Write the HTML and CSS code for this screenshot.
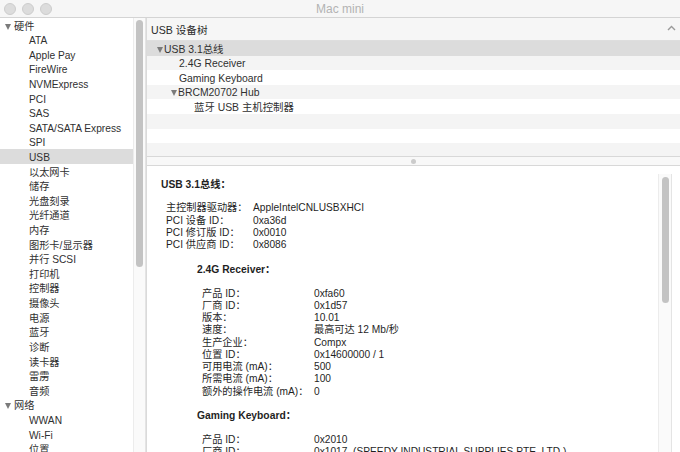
FILE: index.html
```html
<!DOCTYPE html>
<html lang="zh-CN">
<head>
<meta charset="utf-8">
<title>Mac mini</title>
<link rel="stylesheet" href="styles.css">
</head>
<body>
<div class="window">
  <div class="titlebar">
    <div class="lights"><span></span><span></span><span></span></div>
    <div class="title">Mac mini</div>
  </div>
  <div class="main">
    <div class="sidebar">
      <ul class="src">
        <li class="group"><span class="tri"></span>硬件</li>
        <li>ATA</li>
        <li>Apple Pay</li>
        <li>FireWire</li>
        <li>NVMExpress</li>
        <li>PCI</li>
        <li>SAS</li>
        <li>SATA/SATA Express</li>
        <li>SPI</li>
        <li class="sel">USB</li>
        <li>以太网卡</li>
        <li>储存</li>
        <li>光盘刻录</li>
        <li>光纤通道</li>
        <li>内存</li>
        <li>图形卡/显示器</li>
        <li>并行 SCSI</li>
        <li>打印机</li>
        <li>控制器</li>
        <li>摄像头</li>
        <li>电源</li>
        <li>蓝牙</li>
        <li>诊断</li>
        <li>读卡器</li>
        <li>雷雳</li>
        <li>音频</li>
        <li class="group"><span class="tri"></span>网络</li>
        <li>WWAN</li>
        <li>Wi-Fi</li>
        <li>位置</li>
      </ul>
    </div>
    <div class="vscroll side-scroll"><div class="thumb"></div></div>
    <div class="content">
      <div class="tree-pane">
        <div class="tree-head">
          <span>USB 设备树</span>
          <svg class="caret" width="9" height="6" viewBox="0 0 9 6"><polyline points="1,5 4.5,1.5 8,5" fill="none" stroke="#9a9a9a" stroke-width="1.4"/></svg>
        </div>
        <div class="tree-rows">
          <div class="row sel lv0"><span class="tri"></span>USB 3.1总线</div>
          <div class="row lv1">2.4G Receiver</div>
          <div class="row lv1">Gaming Keyboard</div>
          <div class="row lv1t"><span class="tri"></span>BRCM20702 Hub</div>
          <div class="row lv2">蓝牙 USB 主机控制器</div>
        </div>
      </div>
      <div class="splitter"><span class="dot"></span></div>
      <div class="detail">
        <div class="detail-body">
          <div class="sec">
            <h3>USB 3.1总线：</h3>
            <dl class="kv k87">
              <dt>主控制器驱动器：</dt><dd>AppleIntelCNLUSBXHCI</dd>
              <dt>PCI 设备 ID：</dt><dd>0xa36d</dd>
              <dt>PCI 修订版 ID：</dt><dd>0x0010</dd>
              <dt>PCI 供应商 ID：</dt><dd>0x8086</dd>
            </dl>
          </div>
          <div class="sec sub">
            <h3>2.4G Receiver：</h3>
            <dl class="kv k112">
              <dt>产品 ID：</dt><dd>0xfa60</dd>
              <dt>厂商 ID：</dt><dd>0x1d57</dd>
              <dt>版本：</dt><dd>10.01</dd>
              <dt>速度：</dt><dd>最高可达 12 Mb/秒</dd>
              <dt>生产企业：</dt><dd>Compx</dd>
              <dt>位置 ID：</dt><dd>0x14600000 / 1</dd>
              <dt>可用电流 (mA)：</dt><dd>500</dd>
              <dt>所需电流 (mA)：</dt><dd>100</dd>
              <dt>额外的操作电流 (mA)：</dt><dd>0</dd>
            </dl>
          </div>
          <div class="sec sub">
            <h3>Gaming Keyboard：</h3>
            <dl class="kv k112">
              <dt>产品 ID：</dt><dd>0x2010</dd>
              <dt>厂商 ID：</dt><dd>0x1017 &nbsp;(SPEEDY INDUSTRIAL SUPPLIES PTE. LTD.)</dd>
            </dl>
          </div>
        </div>
        <div class="vscroll detail-scroll"><div class="thumb"></div></div>
      </div>
    </div>
  </div>
</div>
</body>
</html>
```

FILE: styles.css
```css
* { box-sizing: border-box; }
html, body { margin: 0; padding: 0; background: #fff; }
body {
  font-family: "Liberation Sans", "Noto Sans CJK SC", sans-serif;
  color: #2a2a2a;
}
.window {
  width: 680px;
  height: 452px;
  overflow: hidden;
  display: flex;
  flex-direction: column;
  background: #fff;
}

/* title bar */
.titlebar {
  height: 18px;
  flex: none;
  background: #f6f6f6;
  border-bottom: 1px solid #d4d4d4;
  display: flex;
  align-items: center;
  position: relative;
}
.lights {
  display: flex;
  gap: 6px;
  padding-left: 4px;
}
.lights span {
  width: 12px;
  height: 12px;
  border-radius: 50%;
  background: #dcdcdc;
  border: 1px solid #cdcdcd;
}
.title {
  position: absolute;
  left: 0;
  right: 0;
  top: 2px;
  text-align: center;
  font-size: 12px;
  line-height: 14px;
  color: #b3b3b3;
}

.main {
  flex: 1;
  display: flex;
  min-height: 0;
}

/* sidebar */
.sidebar {
  width: 133px;
  flex: none;
  overflow: hidden;
}
.src {
  list-style: none;
  margin: 0;
  padding: 0;
  font-size: 10.2px;
  color: #303030;
}
.src li {
  height: 14.62px;
  line-height: 13.12px;
  padding-top: 1.5px;
  padding-left: 29px;
  white-space: nowrap;
}
.src li.group { padding-left: 5px; }
.src li.sel { background: #dcdcdc; }
.tri {
  display: inline-block;
  width: 0;
  height: 0;
  border-left: 3.5px solid transparent;
  border-right: 3.5px solid transparent;
  border-top: 6px solid #7b7b7b;
  margin-right: 3px;
  vertical-align: 0px;
}

/* scrollbars */
.vscroll {
  flex: none;
  background: #fafafa;
  border-left: 1px solid #ececec;
  border-right: 1px solid #e4e4e4;
}
.vscroll .thumb {
  background: #c3c3c3;
  border-radius: 4px;
  width: 7px;
  margin: 0 auto;
}
.side-scroll {
  width: 13px;
  padding-top: 2px;
}
.side-scroll .thumb { height: 247px; }

/* content */
.content {
  flex: 1;
  display: flex;
  flex-direction: column;
  min-width: 0;
  border-left: 1px solid #dadada;
}
.tree-pane {
  height: 138px;
  flex: none;
  display: flex;
  flex-direction: column;
}
.tree-head {
  height: 23px;
  flex: none;
  background: #f6f6f6;
  border-bottom: 1px solid #dedede;
  display: flex;
  align-items: center;
  justify-content: space-between;
  padding: 0 4px 0 4px;
  font-size: 10.6px;
  color: #2a2a2a;
}
.caret { margin-top: -2px; }
.tree-rows {
  flex: 1;
  background: repeating-linear-gradient(#ffffff 0 14.6px, #f4f4f4 14.6px 29.2px);
  font-size: 10.4px;
  color: #303030;
}
.row {
  height: 14.6px;
  line-height: 13.1px;
  padding-top: 1.5px;
  white-space: nowrap;
}
.row.sel { background: #dcdcdc; }
.row.lv0 { padding-left: 10px; }
.row.lv1 { padding-left: 32px; }
.row.lv1t { padding-left: 24px; }
.row.lv2 { padding-left: 47px; }
.row .tri { margin-right: 1px; }

.splitter {
  height: 10px;
  flex: none;
  border-top: 1px solid #d8d8d8;
  border-bottom: 1px solid #d8d8d8;
  background: #f8f8f8;
  display: flex;
  align-items: center;
  justify-content: center;
}
.dot {
  width: 5px;
  height: 5px;
  border-radius: 50%;
  background: #cbcbcb;
}

.detail {
  flex: 1;
  display: flex;
  min-height: 0;
  overflow: hidden;
}
.detail-body {
  flex: 1;
  padding: 12.5px 0 0 14px;
  font-size: 10.2px;
  line-height: 12.25px;
  color: #1f1f1f;
  white-space: nowrap;
}
.detail-scroll {
  width: 14px;
  margin: 8px 8px 0 0;
  padding-top: 3px;
}
.detail-scroll .thumb { height: 126px; }

.sec h3 {
  margin: 0;
  font-size: 10.3px;
  font-weight: bold;
  line-height: 12.25px;
}
.sec.sub { margin-top: 12.5px; padding-left: 36px; }
.kv {
  display: grid;
  margin: 11.5px 0 0 5px;
}
.k87 { grid-template-columns: 87px auto; }
.k112 { grid-template-columns: 112px auto; }
.kv dt, .kv dd { margin: 0; }
```
